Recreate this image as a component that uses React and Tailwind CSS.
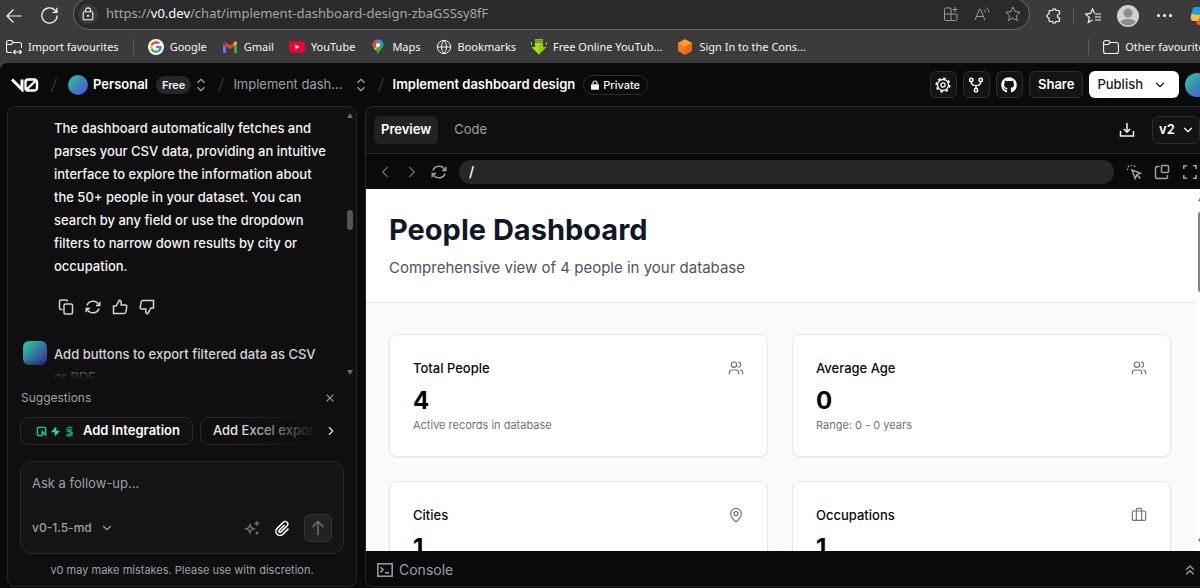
import {
  Briefcase,
  ChevronDown,
  ChevronLeft,
  ChevronRight,
  ChevronsUp,
  Globe,
  MapPin,
  Users,
} from "lucide-react";
import { FaGithub } from "react-icons/fa";

// 16px outline icons, square caps
function Icon({ children, className = "size-4", width = 1.5 }) {
  return (
    <svg
      viewBox="0 0 16 16"
      className={`shrink-0 ${className}`}
      fill="none"
      stroke="currentColor"
      strokeWidth={width}
      aria-hidden="true"
    >
      {children}
    </svg>
  );
}

function RefreshIcon({ className }) {
  return (
    <Icon className={className}>
      <path d="M2 6.5A6.3 6.3 0 0 1 13.8 6M14 9.5A6.3 6.3 0 0 1 2.2 10" />
      <path d="M14.8 2.8v3.7H11M1.2 13.2V9.5H5" />
    </Icon>
  );
}

function UpDownIcon() {
  return (
    <Icon className="size-4 text-zinc-400" width={1.3}>
      <path d="M4.5 5.8 8 2.3l3.5 3.5M4.5 10.2 8 13.7l3.5-3.5" />
    </Icon>
  );
}

function FolderIcon({ arrows }) {
  return (
    <Icon className="size-4" width={1.1}>
      {arrows ? (
        <path d="M6 13.5H2.5a2 2 0 0 1-2-2v-8a2 2 0 0 1 2-2h3l2 2h6a2 2 0 0 1 2 2V9M.5 5.5H5l2.5-2M8 13h7.5M9.5 11 7.5 13l2 2M13.5 11l2 2-2 2" />
      ) : (
        <path d="M.6 5.5H5l2.5-2M2.6 14.5h10.8a2 2 0 0 0 2-2v-7a2 2 0 0 0-2-2H7.5l-2-2H2.6a2 2 0 0 0-2 2v9a2 2 0 0 0 2 2Z" />
      )}
    </Icon>
  );
}

function GoogleIcon() {
  return (
    <svg viewBox="0 0 48 48" className="size-4 shrink-0 rounded-full bg-white p-0.5" aria-hidden="true">
      <path fill="#EA4335" d="M24 9.5c3.54 0 6.71 1.22 9.21 3.6l6.85-6.85C35.9 2.38 30.47 0 24 0 14.62 0 6.51 5.38 2.56 13.22l7.98 6.19C12.43 13.72 17.74 9.5 24 9.5z" />
      <path fill="#4285F4" d="M46.98 24.55c0-1.57-.15-3.09-.38-4.55H24v9.02h12.94c-.58 2.96-2.26 5.48-4.78 7.18l7.73 6c4.51-4.18 7.09-10.36 7.09-17.65z" />
      <path fill="#FBBC05" d="M10.53 28.59c-.48-1.45-.76-2.99-.76-4.59s.27-3.14.76-4.59l-7.98-6.19C.92 16.46 0 20.12 0 24c0 3.88.92 7.54 2.56 10.78l7.97-6.19z" />
      <path fill="#34A853" d="M24 48c6.48 0 11.93-2.13 15.89-5.81l-7.73-6c-2.15 1.45-4.92 2.3-8.16 2.3-6.26 0-11.57-4.22-13.47-9.91l-7.98 6.19C6.51 42.62 14.62 48 24 48z" />
    </svg>
  );
}

function GmailIcon() {
  return (
    <svg viewBox="0 0 16 16" className="size-4 shrink-0" aria-hidden="true">
      <path fill="#4285F4" d="M1 14h3V7.2L1 5z" />
      <path fill="#34A853" d="M12 14h3V5l-3 2.2z" />
      <path fill="#EA4335" d="m4 3.5 4 3 4-3v3.8l-4 3-4-3z" />
      <path fill="#C5221F" d="M1 4c0-1.5 1.7-2 3-1v4.3L1 5z" />
      <path fill="#FBBC04" d="M15 4c0-1.5-1.7-2-3-1v4.3L15 5z" />
    </svg>
  );
}

function YouTubeIcon() {
  return (
    <svg viewBox="0 0 16 16" className="size-4 shrink-0" aria-hidden="true">
      <rect y="2.5" width="16" height="11" rx="2.5" fill="#f00033" />
      <path d="m6.5 5.7 4 2.3-4 2.3z" fill="#fff" />
    </svg>
  );
}

function MapsIcon() {
  return (
    <svg viewBox="0 0 16 16" className="size-4 shrink-0" aria-hidden="true">
      <clipPath id="pin">
        <path d="M8 .5a5.5 5.5 0 0 1 5.500 5.500c0 4-4.500 5-5.500 9.500C7 11 2.500 10 2.500 6A5.500 5.500 0 0 1 8 .5Z" />
      </clipPath>
      <g clipPath="url(#pin)">
        <path fill="#34A853" d="M0 0h16v16H0z" />
        <path fill="#FBBC04" d="M0 12 8 4v4l-5 6z" />
        <path fill="#EA4335" d="M0 0h5l3 6-4 4-4-3z" />
        <path fill="#4285F4" d="M5 0h11v4L8 7z" />
      </g>
      <circle cx="8" cy="6" r="2" fill="#fff" />
    </svg>
  );
}

function DownloadArrow() {
  return (
    <svg viewBox="0 0 16 16" className="size-4 shrink-0" aria-hidden="true">
      <path d="M4 4h8v4h3.5L8 15.500.5 8H4z" fill="#8ccf0a" />
      <path d="M4 4h4v11.500L.5 8H4z" fill="#a5e01c" />
      <path d="M4 .8h8M4 2.800h8" stroke="#a5e01c" strokeWidth="1.200" />
      <path d="M.5 3v3M15.500 3v3" stroke="#8ccf0a" />
    </svg>
  );
}

function CubeIcon() {
  return (
    <svg viewBox="0 0 16 16" className="size-4 shrink-0" aria-hidden="true">
      <path d="m8 .3 7 3.7v8l-7 3.700L1 12V4z" fill="#f5781f" />
      <path d="m8 .3 7 3.700-7 3.800L1 4z" fill="#ff9d2b" />
      <path d="m15 4-7 3.800v7.900l7-3.700z" fill="#e8661a" />
    </svg>
  );
}

const bookmarks = [
  { label: "Google", icon: <GoogleIcon /> },
  { label: "Gmail", icon: <GmailIcon /> },
  { label: "YouTube", icon: <YouTubeIcon /> },
  { label: "Maps", icon: <MapsIcon /> },
  { label: "Bookmarks", icon: <Globe className="size-4" strokeWidth={1.5} /> },
  { label: "Free Online YouTub...", icon: <DownloadArrow /> },
  { label: "Sign In to the Cons...", icon: <CubeIcon /> },
];

const stats = [
  { title: "Total People", value: "4", note: "Active records in database", icon: Users },
  { title: "Average Age", value: "0", note: "Range: 0 - 0 years", icon: Users },
  { title: "Cities", value: "1", icon: MapPin },
  { title: "Occupations", value: "1", icon: Briefcase },
];

function BrowserBar() {
  return (
    <div className="shrink-0 overflow-hidden bg-[#3b3b3b] font-['Noto_Sans','Open_Sans',sans-serif] text-zinc-100">
      <div className="flex h-[31px] items-center">
        <button aria-label="Back" className="ml-1.5">
          <Icon width={1.2} className="size-4">
            <path d="M15.5 8H1M7.5 1.5 1 8l6.500 6.500" />
          </Icon>
        </button>
        <button aria-label="Reload" className="ml-[19px]">
          <Icon width={1.2} className="size-[17px]">
            <path d="M15.2 8A7.2 7.2 0 1 1 13 2.8L15 5M15 .8V5h-4.2" />
          </Icon>
        </button>

        <div className="-mt-0.5 ml-[15px] flex h-8 min-w-0 flex-1 items-center self-start rounded-full border border-[#6a6a6a] bg-[#2a2a2a] pr-2 pl-1">
          <button aria-label="Site information" className="grid size-5 place-items-center rounded-full bg-[#3b3b3b]">
            <Icon width={1.2} className="size-3.5">
              <rect x="2.5" y="5.5" width="11" height="9" rx="1.5" />
              <path d="M5 5.5V4a3 3 0 0 1 6 0v1.5" />
              <circle cx="8" cy="10" r=".6" fill="currentColor" />
            </Icon>
          </button>
          <div
            role="textbox"
            aria-label="Address"
            tabIndex={0}
            className="ml-2 min-w-0 flex-1 truncate text-[13px] text-[#a6a6a6]"
          >
            https://<span className="text-white">v0.dev</span>
            /chat/implement-dashboard-design-zbaGSSsy8fF
          </div>
          <div className="flex items-center gap-[15px] text-[#9a9a9a]">
            <button aria-label="Apps">
              <Icon width={1}>
                <path d="M8 2H3a1.500 1.500 0 0 0-1.500 1.500v9.500a1.500 1.500 0 0 0 1.500 1.500h9.500A1.500 1.500 0 0 0 14 13V8H1.500M8 2v12.500M12 1v5M9.500 3.500h5" />
              </Icon>
            </button>
            <button aria-label="Read aloud">
              <Icon width={1}>
                <path d="M1 14 5.500 3h.8l4.500 11M2.500 10.500h7M10 3.500a4 4 0 0 1 1.500 3M12.500 1.500a7 7 0 0 1 2.500 5" />
              </Icon>
            </button>
            <button aria-label="Add to favourites">
              <Icon width={1}>
                <path d="m8 1 2.100 4.600 5 .6-3.700 3.400 1 5L8 12.100l-4.400 2.500 1-5L.9 6.200l5-.6z" />
              </Icon>
            </button>
          </div>
        </div>

        <button aria-label="Extensions" className="ml-4">
          <Icon width={1.2}>
            <path d="M4 2.500h2.500a1.700 1.700 0 0 1 3.400 0h2.600a1 1 0 0 1 1 1V6a1.800 1.800 0 0 0 0 4v2.500a1 1 0 0 1-1 1H9.900a1.700 1.700 0 0 1-3.400 0H4a1 1 0 0 1-1-1V10a1.800 1.800 0 0 1 0-4V3.500a1 1 0 0 1 1-1Z" />
          </Icon>
        </button>
        <span className="mx-[11px] h-4 w-px bg-[#5c5c5c]" />
        <button aria-label="Favourites">
          <Icon width={1.2}>
            <path d="M9.500 5.200 7.500 1 5.600 5.400l-5 .6 3.700 3.400-1 5 4.200-2.400M10 6h6M10 9h6M10 12h6" />
          </Icon>
        </button>
        <button aria-label="Profile" className="ml-4">
          <svg viewBox="0 0 22 22" className="size-[22px]" aria-hidden="true">
            <circle cx="11" cy="11" r="11" fill="#d2d0ce" />
            <circle cx="11" cy="8" r="4.500" fill="#8f8d8b" />
            <path d="M3.500 17c1-4 14-4 15 0a10 10 0 0 1-15 0Z" fill="#8f8d8b" />
          </svg>
        </button>
        <button aria-label="Settings and more" className="ml-[18px] flex gap-[3px]">
          <span className="size-[3px] rounded-full bg-white" />
          <span className="size-[3px] rounded-full bg-white" />
          <span className="size-[3px] rounded-full bg-white" />
        </button>
        <button aria-label="Copilot" className="-mr-2.5 ml-[18px]">
          <svg viewBox="0 0 20 20" className="size-5" aria-hidden="true">
            <path d="M5 1h8L9 15H3c-3 0-2.500-4-2-6 1-5 2-8 4-8Z" fill="#1f9be8" />
            <path d="M1.500 8C0 13 1 15 4 15h5l1.500-6z" fill="#f2c230" />
            <path d="M10 11h9l-3 8H9c-3 0-3-4-2-4 2 0 2-2 3-4Z" fill="#f0563a" />
          </svg>
        </button>
      </div>

      <nav className="flex h-8 items-center text-[11px] whitespace-nowrap">
        <a href="#import" className="ml-1.5 flex items-center gap-1.5">
          <FolderIcon arrows />
          Import favourites
        </a>
        <span className="mx-3.5 h-4 w-px bg-[#5c5c5c]" />
        <div className="flex min-w-0 flex-1 items-center gap-[15px]">
          {bookmarks.map((item) => (
            <a key={item.label} href="#bookmark" className="flex items-center gap-1.5">
              {item.icon}
              {item.label}
            </a>
          ))}
        </div>
        <span className="mx-3.5 h-4 w-px bg-[#5c5c5c]" />
        <a href="#other" className="-mr-2.5 flex items-center gap-1.5">
          <FolderIcon />
          Other favourites
        </a>
      </nav>
    </div>
  );
}

function Slash() {
  return (
    <Icon className="size-4 text-[#333]" width={1.3}>
      <path d="M5.500 15 10.500 1" />
    </Icon>
  );
}

function AppHeader() {
  const square =
    "grid size-[27px] place-items-center rounded-md border border-[#2e2e2e] bg-[#141414]";

  return (
    <header className="flex h-[43px] shrink-0 items-center rounded-tl-lg bg-[#0a0a0a] pl-[11px] text-[13px] whitespace-nowrap">
      <a href="#home" aria-label="v0">
        <svg viewBox="0 0 28 14" className="h-3.5 w-7" fill="none" stroke="#fff" aria-hidden="true">
          <path d="M1 1.500 11 11.500V1.500" strokeWidth="3" />
          <path d="M17 1.500h6.500a2.500 2.500 0 0 1 2.500 2.500v6a2.500 2.500 0 0 1-2.500 2.500H17a2.500 2.500 0 0 1-2.500-2.500V4A2.500 2.500 0 0 1 17 1.500ZM15 12 25.500 2" strokeWidth="2.400" />
        </svg>
      </a>
      <div className="ml-[7px] flex items-center">
        <Slash />
        <span className="ml-1.5 size-5 rounded-full bg-linear-to-br from-[#25d48a] via-[#3c86b4] to-[#5a2ff0]" />
        <span className="ml-[5px] font-semibold text-white">Personal</span>
        <span className="ml-2 rounded-full bg-[#27272a] px-1.5 text-[11px] leading-[18px] font-semibold text-zinc-100">
          Free
        </span>
        <button aria-label="Switch team" className="ml-0.5">
          <UpDownIcon />
        </button>
      </div>
      <div className="ml-1 flex items-center">
        <Slash />
        <span className="ml-1 text-zinc-400">Implement dash...</span>
        <button aria-label="Switch project" className="ml-2.5">
          <UpDownIcon />
        </button>
      </div>
      <div className="ml-1 flex items-center">
        <Slash />
        <h1 className="ml-1 font-semibold text-white">Implement dashboard design</h1>
        <span className="ml-2 flex items-center gap-1 rounded-full border border-[#2e2e2e] px-[7px] text-[11px] leading-[18px] font-medium text-zinc-100">
          <svg viewBox="0 0 10 12" className="h-2.5 w-2" aria-hidden="true">
            <rect y="5" width="10" height="7" rx="1" fill="currentColor" />
            <path d="M2.500 5V3.500a2.500 2.500 0 0 1 5 0V5" fill="none" stroke="currentColor" strokeWidth="1.500" />
          </svg>
          Private
        </span>
      </div>

      <div className="ml-auto flex items-center gap-1.5 text-white">
        <button aria-label="Settings" className={square}>
          <Icon width={1.3}>
            <circle cx="8" cy="8" r="2.100" />
            <circle cx="8" cy="8" r="5.500" />
            <circle cx="8" cy="8" r="6.800" strokeWidth="1.600" strokeDasharray="2.670 2.670" />
          </Icon>
        </button>
        <button aria-label="Fork" className={square}>
          <Icon>
            <circle cx="3.300" cy="3" r="1.700" />
            <circle cx="12.700" cy="3" r="1.700" />
            <circle cx="8" cy="13.200" r="1.700" />
            <path d="M3.300 4.700c0 3 1.200 3.800 4.700 3.800s4.700-.8 4.700-3.800M8 8.500v3" />
          </Icon>
        </button>
        <button aria-label="GitHub" className={square}>
          <FaGithub className="size-4" />
        </button>
        <button className="h-[27px] rounded-md border border-[#2e2e2e] bg-[#141414] px-2 font-semibold">
          Share
        </button>
        <button className="flex h-[27px] items-center gap-2.5 rounded-md bg-white pr-3 pl-2 font-medium text-zinc-900">
          Publish
          <ChevronDown className="size-3.5" />
        </button>
        <button
          aria-label="Account"
          className="-mr-[9px] size-6 rounded-full bg-linear-to-br from-[#25d48a] via-[#3c86b4] to-[#5a2ff0]"
        />
      </div>
    </header>
  );
}

function ChatPanel() {
  return (
    <section className="flex w-[350px] shrink-0 flex-col rounded-lg border border-[#262626] bg-[#0f0f0f] text-[13px] text-zinc-100">
      <div className="relative flex min-h-0 flex-1 overflow-hidden">
        <div className="min-w-0 flex-1 pt-2.5 pr-4 pl-[15px]">
          <div className="pl-[31px]">
            <p className="leading-[23px] font-medium">
              The dashboard automatically fetches and parses your CSV data, providing an intuitive
              interface to explore the information about the 50+ people in your dataset. You can
              search by any field or use the dropdown filters to narrow down results by city or
              occupation.
            </p>
            <div className="mt-[21px] flex gap-[11px] pl-1 text-zinc-300">
              <button aria-label="Copy">
                <Icon>
                  <path d="M4.500 10.500H3A1.500 1.500 0 0 1 1.500 9V2.500A1.500 1.500 0 0 1 3 1h5a1.500 1.500 0 0 1 1.500 1.500" />
                  <rect x="6" y="5" width="8.500" height="10" rx="1.500" />
                </Icon>
              </button>
              <button aria-label="Regenerate">
                <RefreshIcon />
              </button>
              <button aria-label="Good response">
                <Icon>
                  <path d="M1.500 7H4l3.200-5.700h.3A1.700 1.700 0 0 1 9.200 3v3h4.300a1.300 1.300 0 0 1 1.300 1.500l-.9 5.500a1.800 1.800 0 0 1-1.800 1.500H1.500z" />
                </Icon>
              </button>
              <button aria-label="Bad response">
                <Icon>
                  <path d="M14.500 9H12l-3.200 5.700h-.3A1.700 1.700 0 0 1 6.800 13v-3H2.500a1.300 1.300 0 0 1-1.300-1.500L2.100 3a1.800 1.800 0 0 1 1.800-1.500h10.600z" />
                </Icon>
              </button>
            </div>
          </div>
          <div className="mt-6 flex gap-[7px]">
            <span className="mt-0.5 size-6 shrink-0 rounded-md bg-linear-to-br from-[#1ed98a] via-[#3279a4] to-[#35158c]" />
            <p className="pt-1 leading-[23px] font-medium text-zinc-300">
              Add buttons to export filtered data as CSV or PDF
            </p>
          </div>
        </div>
        <div className="flex w-3 shrink-0 flex-col items-center pt-1.5 pb-1 text-[#6b6b70]">
          <svg viewBox="0 0 6 5" className="h-[5px] w-1.5" fill="currentColor" aria-hidden="true">
            <path d="M3 0 6 5H0z" />
          </svg>
          <span className="mt-[92px] h-5 w-1.5 rounded-full bg-[#52525b]" />
          <svg viewBox="0 0 6 5" className="mt-auto h-[5px] w-1.5" fill="currentColor" aria-hidden="true">
            <path d="M3 5 6 0H0z" />
          </svg>
        </div>
        <div className="pointer-events-none absolute right-3 bottom-0 left-0 h-5 bg-linear-to-t from-[#0f0f0f] to-transparent" />
      </div>

      <div className="shrink-0 px-3 pb-2">
        <div className="flex h-[38px] items-center justify-between pr-2 pl-px text-xs text-zinc-400">
          <span>Suggestions</span>
          <button aria-label="Close suggestions">
            <Icon className="size-3">
              <path d="m3.500 3.500 9 9M12.500 3.500l-9 9" />
            </Icon>
          </button>
        </div>
        <div className="flex items-center gap-[7px] font-semibold whitespace-nowrap">
          <button className="flex h-7 shrink-0 items-center rounded-lg border border-[#2a2a2a] bg-[#121212] pr-3 pl-[15px] text-white">
            <Icon className="size-[11px] text-emerald-400" width={2}>
              <path d="M9 14H4a2 2 0 0 1-2-2V4a2 2 0 0 1 2-2h8a2 2 0 0 1 2 2v9l-5-5z" />
            </Icon>
            <svg viewBox="0 0 12 12" className="ml-[3px] size-[11px]" fill="#34d399" aria-hidden="true">
              <path d="M6.800.5v4.700H11L5.200 11.500V6.800H1z" />
            </svg>
            <Icon className="ml-[3px] size-[11px] text-emerald-500" width={1.6}>
              <path d="M12.500 3C8-.5 2 3.500 4.500 7c2 2.500 7 1 6 4-.8 2-4 2-6.500.5M11.500 5.500C9 4 6 5.500 7.500 7c2 1.500 5.500 1.500 4.700 4.500-.8 3.500-6 4.500-9 2" />
            </Icon>
            <span className="ml-2">Add Integration</span>
          </button>
          <div className="relative min-w-0 flex-1 overflow-hidden">
            <button className="h-7 rounded-lg border border-[#2a2a2a] px-3 font-medium text-zinc-200">
              Add Excel export
            </button>
            <div className="pointer-events-none absolute inset-y-0 right-0 w-20 bg-linear-to-l from-[#0f0f0f] to-transparent" />
          </div>
          <button aria-label="More suggestions" className="mr-1.5 text-zinc-200">
            <ChevronRight className="size-3.5" />
          </button>
        </div>

        <form className="mt-4 rounded-xl border border-[#2a2a2a] bg-[#141414] p-3 pr-[11px] pb-[11px] pl-[11px]">
          <textarea
            aria-label="Ask a follow-up"
            rows={1}
            placeholder="Ask a follow-up..."
            className="block h-10 w-full resize-none bg-transparent text-white outline-none placeholder:text-zinc-400"
          />
          <div className="flex h-7 items-center">
            <label className="flex items-center gap-2 text-xs font-medium text-zinc-400">
              <select aria-label="Model" className="appearance-none bg-transparent outline-none">
                <option>v0-1.5-md</option>
              </select>
              <ChevronDown className="pointer-events-none size-3.5" />
            </label>
            <button type="button" aria-label="Enhance prompt" className="ml-auto text-zinc-500">
              <Icon width={1.3}>
                <path d="M6 4.500 7.200 7.500 10.300 8.800 7.200 10 6 13 4.800 10 1.700 8.800 4.800 7.500zM12.800 1v5M10.300 3.500h5" />
                <circle cx="13" cy="13" r=".8" />
              </Icon>
            </button>
            <button type="button" aria-label="Attach file" className="ml-3.5 text-white">
              <Icon>
                <path d="m10.500 5-5.200 5.200a1.200 1.200 0 0 0 1.700 1.700l6-6a2.600 2.600 0 0 0-3.700-3.700l-6.200 6.200a4.100 4.100 0 0 0 5.800 5.800L14.500 8.600" />
              </Icon>
            </button>
            <button
              type="button"
              aria-label="Send"
              className="ml-3.5 grid size-7 place-items-center rounded-md border border-[#333] bg-[#222225] text-zinc-500"
            >
              <Icon>
                <path d="M8 15V1.500M2.500 7 8 1.500 13.500 7" />
              </Icon>
            </button>
          </div>
        </form>
        <p className="mt-2 text-center text-[11px] leading-4 text-zinc-400">
          v0 may make mistakes. Please use with discretion.
        </p>
      </div>
    </section>
  );
}

function StatCard({ stat }) {
  const StatIcon = stat.icon;
  return (
    <div className="rounded-lg border border-gray-200 bg-white px-[23px] py-[23px] shadow-xs">
      <div className="flex items-center justify-between">
        <h3 className="text-[13px] leading-5 font-medium text-zinc-950">{stat.title}</h3>
        <StatIcon className="size-4 text-zinc-500" strokeWidth={1.75} />
      </div>
      <p className="mt-[7px] text-2xl leading-8 font-bold text-black">{stat.value}</p>
      {stat.note && <p className="text-[11px] leading-4 text-zinc-500">{stat.note}</p>}
    </div>
  );
}

function PreviewPanel() {
  return (
    <section className="flex min-w-0 flex-1 flex-col overflow-hidden rounded-l-lg border border-r-0 border-[#262626] bg-[#0f0f0f] text-[13px]">
      <div className="flex h-[47px] shrink-0 items-center border-b border-[#262626] pl-2">
        <button className="h-7 rounded-md bg-[#222] px-[7px] font-semibold text-white">
          Preview
        </button>
        <button className="ml-2 h-7 px-2 text-zinc-400">Code</button>
        <button aria-label="Download" className="ml-auto text-zinc-100">
          <Icon>
            <path d="M1.500 9v5h13V9M8 1v9M4.800 7 8 10.200 11.200 7" />
          </Icon>
        </button>
        <label className="ml-[17px] flex h-7 items-center gap-1.5 rounded-md border border-[#2e2e2e] bg-[#141414] pr-1 pl-1.5 font-semibold text-white">
          <select aria-label="Version" className="appearance-none bg-transparent outline-none">
            <option>v2</option>
          </select>
          <ChevronDown className="pointer-events-none size-3.5" />
        </label>
      </div>

      <div className="flex h-[35px] shrink-0 items-center bg-[#0a0a0a] pr-0.5 pl-2.5 text-zinc-400">
        <button aria-label="Go back" className="text-zinc-500">
          <ChevronLeft className="size-[18px]" strokeWidth={1.5} />
        </button>
        <button aria-label="Go forward" className="ml-[9px] text-zinc-500">
          <ChevronRight className="size-[18px]" strokeWidth={1.5} />
        </button>
        <button aria-label="Refresh" className="ml-2.5">
          <RefreshIcon />
        </button>
        <input
          aria-label="Path"
          defaultValue="/"
          className="ml-3 h-6 min-w-0 flex-1 rounded-full bg-[#27272a] px-2.5 text-sm font-medium text-white outline-none"
        />
        <div className="ml-3 flex gap-3">
          <button aria-label="Select element">
            <Icon>
              <path d="m6 6 8.500 3.200-3.700 1.600L9.200 14.500zM10.800 10.800l3.700 3.700" />
              <path d="M5.500.8v1.400M.8 5.500h1.400M1.800 1.800l1.200 1.200M9 1.500 8.300 3" />
            </Icon>
          </button>
          <button aria-label="Open in new window">
            <Icon>
              <path d="M5.500 2.500H3A1.500 1.500 0 0 0 1.500 4v9A1.500 1.500 0 0 0 3 14.500h9a1.500 1.500 0 0 0 1.500-1.500v-2" />
              <rect x="7.500" y="1.500" width="7" height="7" rx="1" />
            </Icon>
          </button>
          <button aria-label="Fullscreen">
            <Icon>
              <path d="M1.800 5V1.800H5M11 1.800h3.200V5M14.200 11v3.200H11M5 14.200H1.800V11" />
            </Icon>
          </button>
        </div>
      </div>

      <div className="flex min-h-0 flex-1 overflow-hidden bg-white">
        <main className="min-w-0 flex-1 bg-[#f9fafb]">
          <div className="border-b border-gray-200 bg-white px-[23px] pt-[23px] pb-[22px]">
            <h2 className="text-[29px] leading-9 font-bold text-gray-900">People Dashboard</h2>
            <p className="mt-2 text-[15px] leading-6 text-gray-600">
              Comprehensive view of 4 people in your database
            </p>
          </div>
          <div className="grid grid-cols-2 gap-6 py-[31px] pr-[25px] pl-[23px]">
            {stats.map((stat) => (
              <StatCard key={stat.title} stat={stat} />
            ))}
          </div>
        </main>
        <div className="flex w-1 shrink-0 flex-col items-end overflow-hidden pt-2 pb-2 text-zinc-500">
          <svg viewBox="0 0 3 5" className="h-[5px] w-0.5" fill="currentColor" aria-hidden="true">
            <path d="M3 0v5H0z" />
          </svg>
          <span className="mt-2.5 h-20 w-0.5 rounded-l-full bg-[#858585]" />
          <svg viewBox="0 0 3 5" className="mt-auto h-[5px] w-0.5" fill="currentColor" aria-hidden="true">
            <path d="M3 5V0H0z" />
          </svg>
        </div>
      </div>

      <button className="flex h-[35px] shrink-0 items-center gap-1.5 bg-[#0a0a0a] pt-0.5 pr-0.5 pl-[11px] text-sm text-zinc-400">
        <Icon>
          <rect x=".8" y="1.800" width="14.400" height="12.400" />
          <path d="m3.500 5.200 2.600 2.600-2.600 2.600M8 10.800h4" />
        </Icon>
        Console
        <ChevronsUp className="ml-auto size-4" />
      </button>
    </section>
  );
}

function App() {
  return (
    <div className="flex h-screen flex-col overflow-hidden bg-[#3b3b3b] font-['Inter','Liberation_Sans',sans-serif]">
      <BrowserBar />
      <AppHeader />
      <div className="flex min-h-0 flex-1 gap-2 bg-[#0a0a0a] pb-px pl-[7px]">
        <ChatPanel />
        <PreviewPanel />
      </div>
    </div>
  );
}

export default App;
